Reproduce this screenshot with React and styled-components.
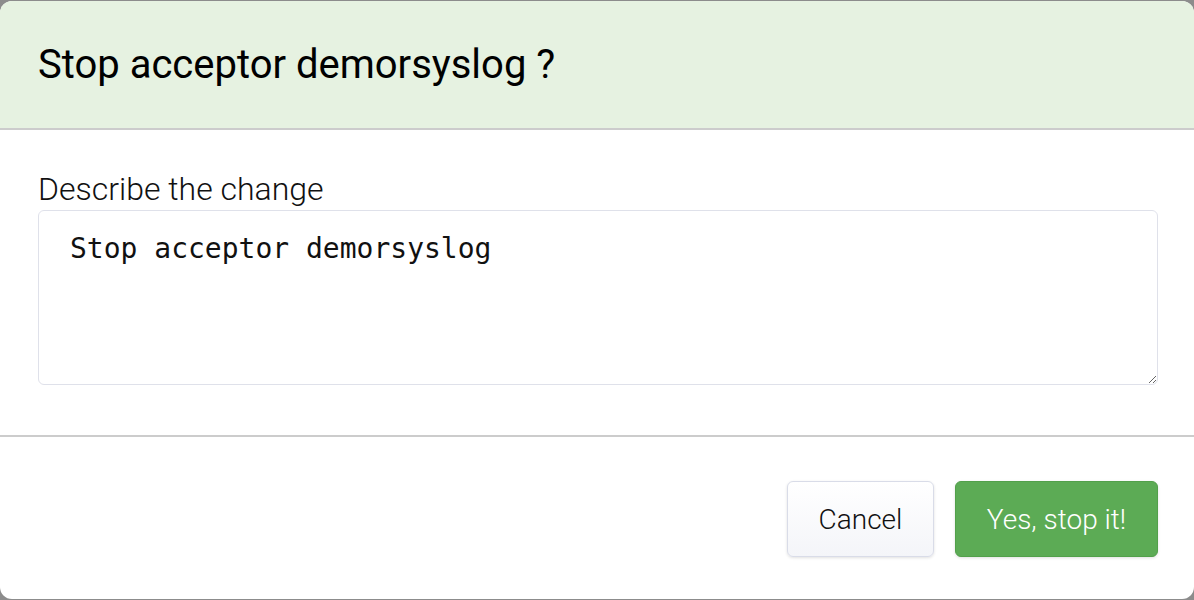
import React from "react";
import styled, { createGlobalStyle } from "styled-components";

const Global = createGlobalStyle`
  html, body { margin: 0; padding: 0; background: #8c8c8c; }
  body { font-family: Roboto, "Liberation Sans", sans-serif; }
  * { box-sizing: border-box; }
`;

const Modal = styled.div`
  margin-top: 1px;
  width: 1194px;
  height: 598px;
  background: #ffffff;
  border-radius: 12px;
  overflow: hidden;
  display: flex;
  flex-direction: column;
`;

const Header = styled.div`
  height: 129px;
  background: #e6f2e1;
  border-bottom: 2px solid #cccccc;
  display: flex;
  align-items: center;
  padding: 0 38px;
`;

const Title = styled.h1`
  margin: 0;
  font-family: Roboto, "Liberation Sans", sans-serif;
  font-weight: 400;
  font-size: 40px;
  line-height: 48px;
  color: #000;
`;

const Body = styled.div`
  height: 307px;
  border-bottom: 2px solid #cccccc;
  padding: 39px 36px 0 38px;
  display: flex;
  flex-direction: column;
`;

const Label = styled.label`
  font-family: Roboto, "Liberation Sans", sans-serif;
  font-weight: 300;
  font-size: 32px;
  color: #111;
  line-height: 40px;
  margin-bottom: 1px;
`;

const TextArea = styled.textarea`
  width: 100%;
  height: 175px;
  border: 1.5px solid #dfe1ea;
  border-radius: 6px;
  padding: 18px 31px;
  font-family: "DejaVu Sans Mono", monospace;
  font-size: 28px;
  line-height: 40px;
  color: #111;
  resize: vertical;
  outline: none;
  background: #fff;
`;

const Footer = styled.div`
  flex: 1;
  display: flex;
  justify-content: flex-end;
  align-items: flex-start;
  gap: 21px;
  padding: 44px 36px 0 0;
`;

const Button = styled.button`
  height: 76px;
  padding: 0 30px;
  min-width: ${(p) => (p.$primary ? "203px" : "147px")};
  border-radius: 6px;
  font-family: Roboto, "Liberation Sans", sans-serif;
  font-weight: 300;
  font-size: 28px;
  cursor: pointer;
  color: ${(p) => (p.$primary ? "#ffffff" : "#111111")};
  background: ${(p) =>
    p.$primary ? "#5cab55" : "linear-gradient(#ffffff, #f4f5f9)"};
  border: 1.5px solid ${(p) => (p.$primary ? "#52a04b" : "#d9dce8")};
  box-shadow: 0 1px 3px rgba(0, 0, 0, 0.12);
`;

export default function App() {
  return (
    <>
      <Global />
      <Modal>
        <Header>
          <Title>Stop acceptor demorsyslog ?</Title>
        </Header>
        <Body>
          <Label>Describe the change</Label>
          <TextArea defaultValue="Stop acceptor demorsyslog" />
        </Body>
        <Footer>
          <Button>Cancel</Button>
          <Button $primary>Yes, stop it!</Button>
        </Footer>
      </Modal>
    </>
  );
}
